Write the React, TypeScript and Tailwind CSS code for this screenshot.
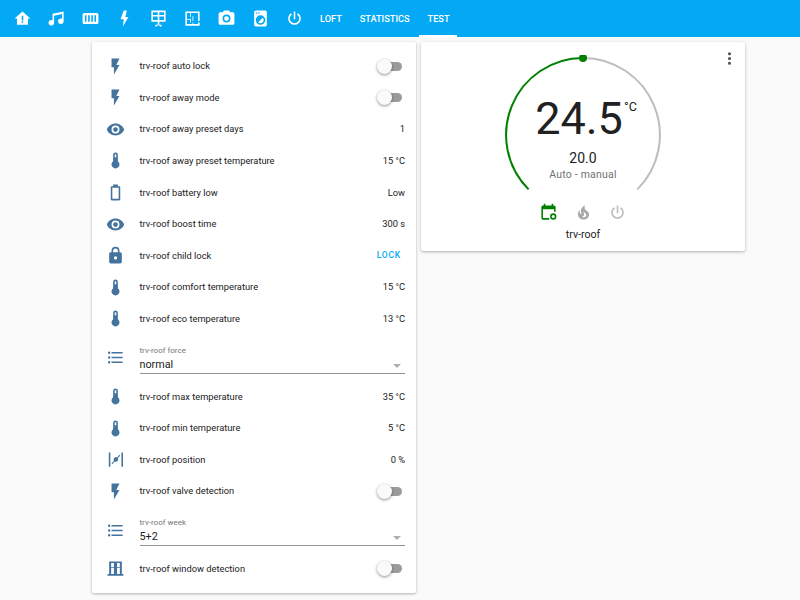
import React from 'react';

const P = {
  homeAlert: 'M12 3L2 12h3v8h14v-8h3L12 3zM11 8.5h2v6h-2zM11 15.5h2v2h-2z',
  music: 'M21,3V15.5A3.5,3.5 0 0,1 17.5,19A3.5,3.5 0 0,1 14,15.5A3.5,3.5 0 0,1 17.5,12C18.04,12 18.55,12.12 19,12.34V6.47L9,8.6V17.5A3.5,3.5 0 0,1 5.5,21A3.5,3.5 0 0,1 2,17.5A3.5,3.5 0 0,1 5.5,14C6.04,14 6.55,14.12 7,14.34V6L21,3Z',
  radiator: 'M4 5h16a2 2 0 0 1 2 2v10a2 2 0 0 1-2 2H4a2 2 0 0 1-2-2V7a2 2 0 0 1 2-2zM5 8v8h2V8zM9 8v8h2V8zM13 8v8h2V8zM17 8v8h2V8z',
  bolt: 'M11 2L7 13h4l-1 9 7-12h-4l2-8z',
  solar: 'M3 2h18v14h-8v4h3v2h-2l-2-2-2 2H8v-2h3v-4H3zM5 4v3.5h6V4zM13 4v3.5h6V4zM5 9.5V14h6V9.5zM13 9.5V14h6V9.5z',
  floor: 'M10,5V10H9V5H5V13H9V12H10V17H9V14H5V19H12V17H13V19H19V17H21V21H3V3H21V15H19V10H13V15H12V9H13V10H19V5H10Z',
  camera: 'M4,4H7L9,2H15L17,4H20A2,2 0 0,1 22,6V18A2,2 0 0,1 20,20H4A2,2 0 0,1 2,18V6A2,2 0 0,1 4,4M12,7A5,5 0 0,0 7,12A5,5 0 0,0 12,17A5,5 0 0,0 17,12A5,5 0 0,0 12,7M12,9A3,3 0 0,1 15,12A3,3 0 0,1 12,15A3,3 0 0,1 9,12A3,3 0 0,1 12,9Z',
  washer: 'M14.83,11.17C16.39,12.73 16.39,15.27 14.83,16.83C13.27,18.39 10.73,18.39 9.17,16.83L14.83,11.17M6,2H18A2,2 0 0,1 20,4V20A2,2 0 0,1 18,22H6A2,2 0 0,1 4,20V4A2,2 0 0,1 6,2M7,4A1,1 0 0,0 6,5A1,1 0 0,0 7,6A1,1 0 0,0 8,5A1,1 0 0,0 7,4M10,4A1,1 0 0,0 9,5A1,1 0 0,0 10,6A1,1 0 0,0 11,5A1,1 0 0,0 10,4M12,8A6,6 0 0,0 6,14A6,6 0 0,0 12,20A6,6 0 0,0 18,14A6,6 0 0,0 12,8Z',
  power: 'M16.56,5.44L15.11,6.89C16.84,7.94 18,9.83 18,12A6,6 0 0,1 12,18A6,6 0 0,1 6,12C6,9.83 7.16,7.94 8.88,6.88L7.44,5.44C5.36,6.88 4,9.28 4,12A8,8 0 0,0 12,20A8,8 0 0,0 20,12C20,9.28 18.64,6.88 16.56,5.44M13,3H11V13H13',
  flash: 'M7,2V13H10V22L17,10H13L17,2H7Z',
  eye: 'M12,9A3,3 0 0,0 9,12A3,3 0 0,0 12,15A3,3 0 0,0 15,12A3,3 0 0,0 12,9M12,17A5,5 0 0,1 7,12A5,5 0 0,1 12,7A5,5 0 0,1 17,12A5,5 0 0,1 12,17M12,4.5C7,4.5 2.73,7.61 1,12C2.73,16.39 7,19.5 12,19.5C17,19.5 21.27,16.39 23,12C21.27,7.61 17,4.5 12,4.5Z',
  thermo: 'M15 13V5A3 3 0 0 0 9 5V13A5 5 0 1 0 15 13M12 4A1 1 0 0 1 13 5V8H11V5A1 1 0 0 1 12 4Z',
  battery: 'M16,20H8V6H16M16.67,4H15V2H9V4H7.33A1.33,1.33 0 0,0 6,5.33V20.67C6,21.4 6.6,22 7.33,22H16.67A1.33,1.33 0 0,0 18,20.67V5.33C18,4.6 17.4,4 16.67,4Z',
  lock: 'M12,17A2,2 0 0,0 14,15C14,13.89 13.1,13 12,13A2,2 0 0,0 10,15A2,2 0 0,0 12,17M18,8A2,2 0 0,1 20,10V20A2,2 0 0,1 18,22H6A2,2 0 0,1 4,20V10C4,8.89 4.9,8 6,8H7V6A5,5 0 0,1 12,1A5,5 0 0,1 17,6V8H18M12,3A3,3 0 0,0 9,6V8H15V6A3,3 0 0,0 12,3Z',
  list: 'M7,5H21V7H7V5M7,13V11H21V13H7M4,4.5A1.5,1.5 0 0,1 5.5,6A1.5,1.5 0 0,1 4,7.5A1.5,1.5 0 0,1 2.5,6A1.5,1.5 0 0,1 4,4.5M4,10.5A1.5,1.5 0 0,1 5.5,12A1.5,1.5 0 0,1 4,13.5A1.5,1.5 0 0,1 2.5,12A1.5,1.5 0 0,1 4,10.5M7,19V17H21V19H7M4,16.5A1.5,1.5 0 0,1 5.5,18A1.5,1.5 0 0,1 4,19.5A1.5,1.5 0 0,1 2.5,18A1.5,1.5 0 0,1 4,16.5Z',
  position: 'M3.5 3h2v18h-2zM19.5 3h2v18h-2zM17 6l1 1-3 3.4a3 3 0 0 1-.4 3.6 3 3 0 0 1-3.6.6L8 18l-1-1 3-3.4a3 3 0 0 1 .4-3.6 3 3 0 0 1 3.6-.6z',
  windowClosed: 'M4 3h16v16h2v2H2v-2h2zM6.5 5v14H10V5zM14 5v14h3.5V5zM6.5 10h3.5v1H6.5zM14 10h3.5v1H14z',
  fire: 'M17.66 11.2C17.43 10.9 17.15 10.64 16.89 10.38C16.22 9.78 15.46 9.35 14.82 8.72C13.33 7.26 13 4.85 13.95 3C13 3.23 12.17 3.75 11.46 4.32C8.87 6.4 7.85 10.07 9.07 13.22C9.11 13.32 9.15 13.42 9.15 13.55C9.15 13.77 9 13.97 8.8 14.05C8.57 14.15 8.33 14.09 8.14 13.93C8.08 13.88 8.04 13.83 8 13.76C6.87 12.33 6.69 10.28 7.45 8.64C5.78 10 4.87 12.3 5 14.47C5.06 14.97 5.12 15.47 5.29 15.97C5.43 16.57 5.7 17.17 6 17.7C7.08 19.43 8.95 20.67 10.96 20.92C13.1 21.19 15.39 20.8 17.03 19.32C18.86 17.66 19.5 15 18.56 12.72L18.43 12.46C18.22 12 17.66 11.2 17.66 11.2M14.5 17.5C14.22 17.74 13.76 18 13.4 18.1C12.28 18.5 11.16 17.94 10.5 17.28C11.69 17 12.4 16.12 12.61 15.23C12.78 14.43 12.46 13.77 12.33 13C12.21 12.26 12.23 11.63 12.5 10.94C12.69 11.32 12.89 11.7 13.13 12C13.9 13 15.11 13.44 15.37 14.8C15.41 14.94 15.43 15.08 15.43 15.23C15.46 16.05 15.1 16.95 14.5 17.5H14.5Z',
  calendar: 'M19 3h-1V1h-2v2H8V1H6v2H5a2 2 0 0 0-2 2v14a2 2 0 0 0 2 2h8v-2H5V8h14v3h2V5a2 2 0 0 0-2-2zM18 13a4 4 0 1 0 0 8 4 4 0 0 0 0-8zm0 2a2 2 0 1 1 0 4 2 2 0 0 1 0-4z',
  dots: 'M12,16A2,2 0 0,1 14,18A2,2 0 0,1 12,20A2,2 0 0,1 10,18A2,2 0 0,1 12,16M12,10A2,2 0 0,1 14,12A2,2 0 0,1 12,14A2,2 0 0,1 10,12A2,2 0 0,1 12,10M12,4A2,2 0 0,1 14,6A2,2 0 0,1 12,8A2,2 0 0,1 10,6A2,2 0 0,1 12,4Z',
};

const Icon = ({ d, className = '' }: { d: string; className?: string }) => (
  <svg viewBox="0 0 24 24" fill="currentColor" fillRule="evenodd" className={`w-[19px] h-[19px] shrink-0 ${className}`}>
    <path d={d} />
  </svg>
);

const Toggle = () => (
  <div className="relative w-[22px] h-[9px] mr-[3px] rounded-full bg-[#9b9b9b]">
    <div className="absolute left-[-3px] top-[-3px] w-[15px] h-[15px] rounded-full bg-[#fafafa] shadow-[0_1px_3px_rgba(0,0,0,0.45)]" />
  </div>
);

const Row = ({ icon, label, children }: { icon: string; label: string; children?: React.ReactNode }) => (
  <div className="flex items-center h-[31.6px] pl-[13.5px] pr-[11px]">
    <Icon d={icon} className="text-[#44739e]" />
    <span className="ml-[15px] flex-1 text-[9.3px] text-[#212121]">{label}</span>
    {children}
  </div>
);

const Value = ({ children }: { children: React.ReactNode }) => (
  <span className="text-[9.3px] text-[#212121]">{children}</span>
);

const Dropdown = ({ label, value }: { label: string; value: string }) => (
  <div className="flex items-center h-[46px] pl-[13.5px] pr-[11px]">
    <Icon d={P.list} className="text-[#44739e]" />
    <div className="relative ml-[15px] flex-1 border-b-[1.5px] border-[#949494] pt-[3px]">
      <div className="text-[8px] leading-[11px] text-[#757575]">{label}</div>
      <div className="text-[10.8px] leading-[17px] text-[#212121]">{value}</div>
      <div className="absolute right-[4px] bottom-[5px] w-0 h-0 border-x-[4px] border-x-transparent border-t-[4px] border-t-[#b0b0b0]" />
    </div>
  </div>
);

const navIcons = [P.homeAlert, P.music, P.radiator, P.bolt, P.solar, P.floor, P.camera, P.washer, P.power];

const Gauge = () => (
  <div className="relative w-[160px] h-[146px] mt-[13px]">
    <svg viewBox="0 0 160 160" className="absolute left-0 top-0 w-[160px] h-[160px]" fill="none" strokeWidth="2">
      <path d="M134.4 134.4A77 77 0 0 0 80 3" stroke="#bdbdbd" />
      <path d="M25.6 134.4A77 77 0 0 1 80 3" stroke="#008000" />
      <circle cx="80" cy="3" r="4" fill="#008000" />
    </svg>
    <div className="absolute left-0 right-[8px] top-[31px] flex justify-center text-[#212121]">
      <span className="text-[45px] leading-[66px]">24.5</span>
    </div>
    <span className="absolute left-[121px] top-[44px] text-[12.6px] leading-[15px] text-[#212121]">°C</span>
    <div className="absolute left-0 right-0 top-[93px] text-center text-[14px] leading-[20px] text-[#212121]">20.0</div>
    <div className="absolute left-0 right-0 top-[112px] text-center text-[10.5px] leading-[16px] tracking-[0.2px] text-[#727272]">Auto - manual</div>
  </div>
);

export default function App() {
  return (
    <div className="min-h-screen bg-[#fafafa] font-['Roboto',sans-serif] overflow-hidden">
      <header className="flex h-[37px] pl-[5px] bg-[#03a9f4] text-white">
        {navIcons.map((d, i) => (
          <div key={i} className="flex items-center justify-center w-[34px]">
            <Icon d={d} />
          </div>
        ))}
        <div className="flex items-center px-[9px] pt-[1px] text-[9.2px] font-medium">LOFT</div>
        <div className="flex items-center px-[9px] pt-[1px] text-[9.2px] font-medium">STATISTICS</div>
        <div className="flex items-center pl-[9px] pr-[7.5px] pt-[3px] text-[9.2px] font-medium border-b-2 border-white">TEST</div>
      </header>

      <main className="flex items-start gap-[5px] pl-[92px] pt-[5px]">
        <section className="w-[324px] pt-[8.4px] pb-[8.6px] bg-white rounded-[2px] shadow-[0_1px_3px_rgba(0,0,0,0.3)]">
          <Row icon={P.flash} label="trv-roof auto lock"><Toggle /></Row>
          <Row icon={P.flash} label="trv-roof away mode"><Toggle /></Row>
          <Row icon={P.eye} label="trv-roof away preset days"><Value>1</Value></Row>
          <Row icon={P.thermo} label="trv-roof away preset temperature"><Value>15 °C</Value></Row>
          <Row icon={P.battery} label="trv-roof battery low"><Value>Low</Value></Row>
          <Row icon={P.eye} label="trv-roof boost time"><Value>300 s</Value></Row>
          <Row icon={P.lock} label="trv-roof child lock">
            <span className="mr-[4px] text-[8.5px] font-medium tracking-[0.8px] text-[#03a9f4]">LOCK</span>
          </Row>
          <Row icon={P.thermo} label="trv-roof comfort temperature"><Value>15 °C</Value></Row>
          <Row icon={P.thermo} label="trv-roof eco temperature"><Value>13 °C</Value></Row>
          <Dropdown label="trv-roof force" value="normal" />
          <Row icon={P.thermo} label="trv-roof max temperature"><Value>35 °C</Value></Row>
          <Row icon={P.thermo} label="trv-roof min temperature"><Value>5 °C</Value></Row>
          <Row icon={P.position} label="trv-roof position"><Value>0 %</Value></Row>
          <Row icon={P.flash} label="trv-roof valve detection"><Toggle /></Row>
          <Dropdown label="trv-roof week" value="5+2" />
          <Row icon={P.windowClosed} label="trv-roof window detection"><Toggle /></Row>
        </section>

        <section className="relative flex flex-col items-center w-[324px] h-[209px] bg-white rounded-[2px] shadow-[0_1px_3px_rgba(0,0,0,0.3)]">
          <Icon d={P.dots} className="absolute right-[6.5px] top-[6.5px] text-[#555555]" />
          <Gauge />
          <div className="flex gap-[15.5px] mt-[1.5px]">
            <Icon d={P.calendar} className="text-[#008000]" />
            <Icon d={P.fire} className="text-[#a9a9a9]" />
            <Icon d={P.power} className="text-[#bdbdbd]" />
          </div>
          <div className="mt-[4px] text-[10.6px] leading-[18px] text-[#212121]">trv-roof</div>
        </section>
      </main>
    </div>
  );
}
